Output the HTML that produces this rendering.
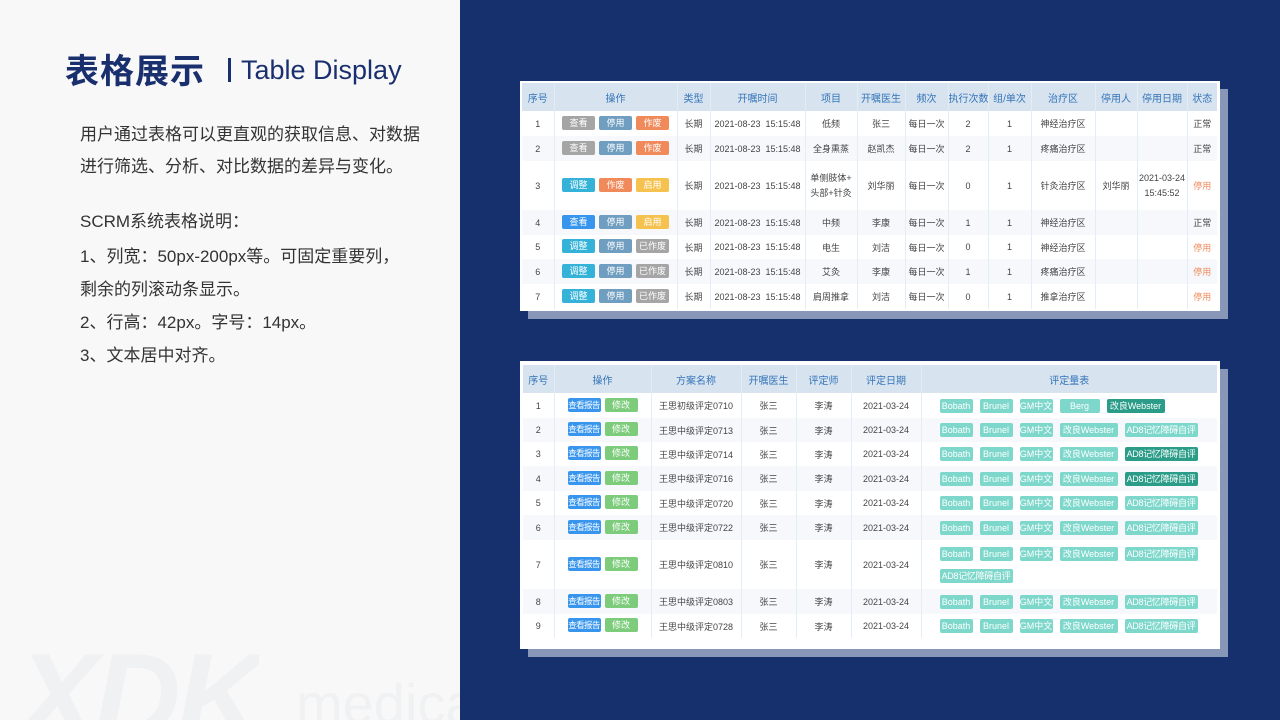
<!DOCTYPE html>
<html><head><meta charset="utf-8">
<style>
*{margin:0;padding:0;box-sizing:border-box}
body{width:1280px;height:720px;overflow:hidden;position:relative;font-family:"Liberation Sans","Noto Sans CJK SC",sans-serif;background:#15306c}
.left{position:absolute;left:0;top:0;width:460px;height:720px;background:#f8f8f9;overflow:hidden}
.title{position:absolute;left:65px;top:44px;font-size:34px;font-weight:bold;color:#1a2f6e;letter-spacing:1px;white-space:nowrap}
.sub{position:absolute;left:228px;top:55px;font-size:27px;color:#1a2f6e;white-space:nowrap}
.sub b{display:inline-block;width:3px;height:24px;background:#1a2f6e;vertical-align:-3px;margin-right:10px}
.p{position:absolute;left:80px;font-size:17px;color:#333;white-space:nowrap}
.wm{position:absolute;color:#f0f1f3;font-weight:bold;white-space:nowrap;overflow:hidden;line-height:1}
.shadow{position:absolute;background:#8897b7}
.card{position:absolute;background:#fff}
table{border-collapse:collapse;table-layout:fixed;position:absolute;font-size:9px;color:#444}
th{background:#d7e4f0;color:#3574b8;font-weight:normal;font-size:10px;height:28px;border-right:1px solid #e3edf8;white-space:nowrap;overflow:hidden}
td{text-align:center;border-right:1px solid #e3edf8;white-space:nowrap;overflow:hidden}
th:last-child,td:last-child{border-right:none}
tr.a td{background:#f6f8fb}
.b{display:inline-block;width:33px;height:14px;line-height:14px;border-radius:2px;color:#fff;font-size:9px;margin:0 2px;text-align:center;overflow:hidden;white-space:nowrap}
.b.k{font-size:8.5px;letter-spacing:-0.6px}
.g{background:#a5a5a5}.s{background:#6f9ec0}.o{background:#f08a5b}.c{background:#35b2d8}.y{background:#f6c24f}.bl{background:#3795ee}.gr{background:#7ccc7c}
.tg{text-align:left!important;padding-left:18px}
.t{display:inline-block;height:14px;line-height:14px;border-radius:2px;color:#fff;font-size:9px;background:#7dd7cb;margin:0 7px 0 0;text-align:center;width:33px;vertical-align:middle;overflow:hidden;white-space:nowrap}
.t.w{width:58px}.t.a8{width:73px;letter-spacing:-0.3px}
.t.d{background:#2a9c88}
.r{color:#f08a5b}
</style></head><body>
<div class="left">
<div class="title">表格展示</div>
<div class="sub"><b></b>Table Display</div>
<div class="p" style="top:120px">用户通过表格可以更直观的获取信息、对数据</div>
<div class="p" style="top:152px">进行筛选、分析、对比数据的差异与变化。</div>
<div class="p" style="top:207px">SCRM系统表格说明：</div>
<div class="p" style="top:242px">1、列宽：50px-200px等。可固定重要列，</div>
<div class="p" style="top:275px">剩余的列滚动条显示。</div>
<div class="p" style="top:308px">2、行高：42px。字号：14px。</div>
<div class="p" style="top:341px">3、文本居中对齐。</div>
<div class="wm" style="left:18px;top:636px;height:84px;font-size:120px;letter-spacing:-4px;font-style:italic">XDK</div>
<div class="wm" style="left:296px;top:676px;height:44px;font-size:56px;font-weight:normal">medical</div>
</div>

<div class="shadow" style="left:528px;top:89px;width:700px;height:230px"></div>
<div class="card" style="left:520px;top:81px;width:700px;height:230px"></div>
<table style="left:522px;top:83px;width:695px">
<colgroup><col style="width:32px"><col style="width:123px"><col style="width:33px"><col style="width:95px"><col style="width:52px"><col style="width:48px"><col style="width:43px"><col style="width:40px"><col style="width:43px"><col style="width:64px"><col style="width:42px"><col style="width:50px"><col style="width:30px"></colgroup>
<tr><th>序号</th><th>操作</th><th>类型</th><th>开嘱时间</th><th>项目</th><th>开嘱医生</th><th>频次</th><th>执行次数</th><th>组/单次</th><th>治疗区</th><th>停用人</th><th>停用日期</th><th>状态</th></tr>
<tr style="height:25px"><td>1</td><td><span class="b g">查看</span><span class="b s">停用</span><span class="b o">作废</span></td><td>长期</td><td>2021-08-23&nbsp; 15:15:48</td><td>低频</td><td>张三</td><td>每日一次</td><td>2</td><td>1</td><td>神经治疗区</td><td></td><td></td><td>正常</td></tr>
<tr class="a" style="height:25px"><td>2</td><td><span class="b g">查看</span><span class="b s">停用</span><span class="b o">作废</span></td><td>长期</td><td>2021-08-23&nbsp; 15:15:48</td><td>全身熏蒸</td><td>赵凯杰</td><td>每日一次</td><td>2</td><td>1</td><td>疼痛治疗区</td><td></td><td></td><td>正常</td></tr>
<tr style="height:49px"><td>3</td><td><span class="b c">调整</span><span class="b o">作废</span><span class="b y">启用</span></td><td>长期</td><td>2021-08-23&nbsp; 15:15:48</td><td style="line-height:15px">单侧肢体+<br>头部+针灸</td><td>刘华丽</td><td>每日一次</td><td>0</td><td>1</td><td>针灸治疗区</td><td>刘华丽</td><td style="line-height:15px">2021-03-24<br>15:45:52</td><td class="r">停用</td></tr>
<tr class="a" style="height:25px"><td>4</td><td><span class="b bl">查看</span><span class="b s">停用</span><span class="b y">启用</span></td><td>长期</td><td>2021-08-23&nbsp; 15:15:48</td><td>中频</td><td>李康</td><td>每日一次</td><td>1</td><td>1</td><td>神经治疗区</td><td></td><td></td><td>正常</td></tr>
<tr style="height:24px"><td>5</td><td><span class="b c">调整</span><span class="b s">停用</span><span class="b g">已作废</span></td><td>长期</td><td>2021-08-23&nbsp; 15:15:48</td><td>电生</td><td>刘洁</td><td>每日一次</td><td>0</td><td>1</td><td>神经治疗区</td><td></td><td></td><td class="r">停用</td></tr>
<tr class="a" style="height:25px"><td>6</td><td><span class="b c">调整</span><span class="b s">停用</span><span class="b g">已作废</span></td><td>长期</td><td>2021-08-23&nbsp; 15:15:48</td><td>艾灸</td><td>李康</td><td>每日一次</td><td>1</td><td>1</td><td>疼痛治疗区</td><td></td><td></td><td class="r">停用</td></tr>
<tr style="height:25px"><td>7</td><td><span class="b c">调整</span><span class="b s">停用</span><span class="b g">已作废</span></td><td>长期</td><td>2021-08-23&nbsp; 15:15:48</td><td>肩周推拿</td><td>刘洁</td><td>每日一次</td><td>0</td><td>1</td><td>推拿治疗区</td><td></td><td></td><td class="r">停用</td></tr>
</table>

<div class="shadow" style="left:528px;top:369px;width:700px;height:288px"></div>
<div class="card" style="left:520px;top:361px;width:700px;height:288px"></div>
<table style="left:523px;top:365px;width:694px">
<colgroup><col style="width:31px"><col style="width:97px"><col style="width:90px"><col style="width:55px"><col style="width:55px"><col style="width:70px"><col style="width:296px"></colgroup>
<tr><th>序号</th><th>操作</th><th>方案名称</th><th>开嘱医生</th><th>评定师</th><th>评定日期</th><th>评定量表</th></tr>
<tr style="height:25px"><td>1</td><td><span class="b bl k">查看报告</span><span class="b gr">修改</span></td><td>王思初级评定0710</td><td>张三</td><td>李涛</td><td>2021-03-24</td><td class="tg"><span class="t">Bobath</span><span class="t">Brunel</span><span class="t">GM中文</span><span class="t" style="width:40px">Berg</span><span class="t w d">改良Webster</span></td></tr>
<tr class="a" style="height:24px"><td>2</td><td><span class="b bl k">查看报告</span><span class="b gr">修改</span></td><td>王思中级评定0713</td><td>张三</td><td>李涛</td><td>2021-03-24</td><td class="tg"><span class="t">Bobath</span><span class="t">Brunel</span><span class="t">GM中文</span><span class="t w">改良Webster</span><span class="t a8">AD8记忆障碍自评</span></td></tr>
<tr style="height:24px"><td>3</td><td><span class="b bl k">查看报告</span><span class="b gr">修改</span></td><td>王思中级评定0714</td><td>张三</td><td>李涛</td><td>2021-03-24</td><td class="tg"><span class="t">Bobath</span><span class="t">Brunel</span><span class="t">GM中文</span><span class="t w">改良Webster</span><span class="t a8 d">AD8记忆障碍自评</span></td></tr>
<tr class="a" style="height:25px"><td>4</td><td><span class="b bl k">查看报告</span><span class="b gr">修改</span></td><td>王思中级评定0716</td><td>张三</td><td>李涛</td><td>2021-03-24</td><td class="tg"><span class="t">Bobath</span><span class="t">Brunel</span><span class="t">GM中文</span><span class="t w">改良Webster</span><span class="t a8 d">AD8记忆障碍自评</span></td></tr>
<tr style="height:24px"><td>5</td><td><span class="b bl k">查看报告</span><span class="b gr">修改</span></td><td>王思中级评定0720</td><td>张三</td><td>李涛</td><td>2021-03-24</td><td class="tg"><span class="t">Bobath</span><span class="t">Brunel</span><span class="t">GM中文</span><span class="t w">改良Webster</span><span class="t a8">AD8记忆障碍自评</span></td></tr>
<tr class="a" style="height:25px"><td>6</td><td><span class="b bl k">查看报告</span><span class="b gr">修改</span></td><td>王思中级评定0722</td><td>张三</td><td>李涛</td><td>2021-03-24</td><td class="tg"><span class="t">Bobath</span><span class="t">Brunel</span><span class="t">GM中文</span><span class="t w">改良Webster</span><span class="t a8">AD8记忆障碍自评</span></td></tr>
<tr style="height:49px"><td>7</td><td><span class="b bl k">查看报告</span><span class="b gr">修改</span></td><td>王思中级评定0810</td><td>张三</td><td>李涛</td><td>2021-03-24</td><td class="tg"><div style="height:14px;margin-bottom:8px"><span class="t">Bobath</span><span class="t">Brunel</span><span class="t">GM中文</span><span class="t w">改良Webster</span><span class="t a8">AD8记忆障碍自评</span></div><div style="height:14px"><span class="t a8">AD8记忆障碍自评</span></div></td></tr>
<tr class="a" style="height:25px"><td>8</td><td><span class="b bl k">查看报告</span><span class="b gr">修改</span></td><td>王思中级评定0803</td><td>张三</td><td>李涛</td><td>2021-03-24</td><td class="tg"><span class="t">Bobath</span><span class="t">Brunel</span><span class="t">GM中文</span><span class="t w">改良Webster</span><span class="t a8">AD8记忆障碍自评</span></td></tr>
<tr style="height:24px"><td>9</td><td><span class="b bl k">查看报告</span><span class="b gr">修改</span></td><td>王思中级评定0728</td><td>张三</td><td>李涛</td><td>2021-03-24</td><td class="tg"><span class="t">Bobath</span><span class="t">Brunel</span><span class="t">GM中文</span><span class="t w">改良Webster</span><span class="t a8">AD8记忆障碍自评</span></td></tr>
</table>
</body></html>
